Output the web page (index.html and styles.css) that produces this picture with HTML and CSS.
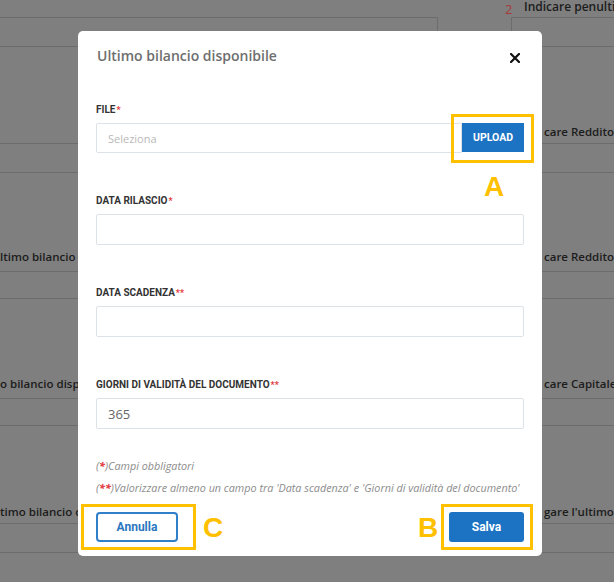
FILE: index.html
```html
<!DOCTYPE html>
<html lang="it">
<head>
<meta charset="utf-8">
<title>Ultimo bilancio disponibile</title>
<link rel="stylesheet" href="styles.css">
</head>
<body>
<div class="page">
  <div class="bg-top"><span class="bg-num">2</span><span class="bg-txt">Indicare penultim</span></div>
  <div class="bg-boxes"><div class="bg-box bg-box-l"></div><div class="bg-box bg-box-r"></div></div>
  <div class="bg-row r1"><span class="bg-left"></span><span class="bg-right">care Reddito</span></div>
  <div class="bg-sub s1"></div>
  <div class="bg-row r2"><span class="bg-left">ltimo bilancio d</span><span class="bg-right">care Reddito</span></div>
  <div class="bg-sub s2"></div>
  <div class="bg-row r3"><span class="bg-left">o bilancio dispo</span><span class="bg-right">care Capitale</span></div>
  <div class="bg-sub s3"></div>
  <div class="bg-row r4"><span class="bg-left">timo bilancio d</span><span class="bg-right">gare l'ultimo</span></div>
  <div class="bg-sub s4"></div>
</div>

<div class="modal">
  <div class="modal-header">
    <div class="title">Ultimo bilancio disponibile</div>
    <svg class="close" width="10" height="10" viewBox="0 0 10 10"><path d="M1 1L9 9M9 1L1 9" stroke="#111" stroke-width="2.2" stroke-linecap="square"/></svg>
  </div>
  <div class="form">
    <div class="field">
      <div class="label">FILE<span class="req">*</span></div>
      <div class="input-group">
        <div class="input placeholder">Seleziona</div>
        <div class="btn-upload">UPLOAD</div>
      </div>
    </div>
    <div class="field">
      <div class="label">DATA RILASCIO<span class="req">*</span></div>
      <div class="input"></div>
    </div>
    <div class="field">
      <div class="label">DATA SCADENZA<span class="req">**</span></div>
      <div class="input"></div>
    </div>
    <div class="field">
      <div class="label">GIORNI DI VALIDITÀ DEL DOCUMENTO<span class="req">**</span></div>
      <div class="input value">365</div>
    </div>
  </div>
  <div class="notes">
    <p>(<span class="req">*</span>)Campi obbligatori</p>
    <p>(<span class="req">**</span>)Valorizzare almeno un campo tra 'Data scadenza' e 'Giorni di validità del documento'</p>
  </div>
  <div class="actions">
    <div class="btn-cancel">Annulla</div>
    <div class="btn-save">Salva</div>
  </div>
</div>

<div class="anno-box anno-a"></div>
<div class="anno-box anno-b"></div>
<div class="anno-box anno-c"></div>
<div class="anno-letter letter-a">A</div>
<div class="anno-letter letter-b">B</div>
<div class="anno-letter letter-c">C</div>
</body>
</html>
```

FILE: styles.css
```css
html, body {
  margin: 0;
  padding: 0;
}
body {
  width: 614px;
  height: 582px;
  overflow: hidden;
  background: #7f7f7f;
  position: relative;
  font-family: "Open Sans", "Noto Sans", sans-serif;
}
.page {
  width: 614px;
  white-space: nowrap;
  color: #1c1c1c;
}
.bg-top {
  height: 17px;
  display: flex;
  align-items: flex-start;
  padding-left: 505px;
  box-sizing: border-box;
  font-size: 12px;
  font-weight: 600;
  line-height: 13px;
  overflow: hidden;
}
.bg-num {
  display: inline-block;
  color: #a83a3a;
  font-weight: 400;
  font-size: 13px;
  margin-top: 3px;
  width: 19px;
  flex: none;
}
.bg-txt {
  margin-top: 0;
}
.bg-boxes {
  height: 30px;
  display: flex;
  justify-content: space-between;
}
.bg-box {
  height: 30px;
  box-sizing: border-box;
  border-top: 1px solid #6c6c6c;
  border-bottom: 1px solid #6c6c6c;
}
.bg-box-l {
  width: 438px;
  border-right: 1px solid #6c6c6c;
}
.bg-box-r {
  width: 103px;
  border-left: 1px solid #6c6c6c;
}
.bg-row {
  display: grid;
  grid-template-columns: 78px 466px 70px;
  align-items: end;
  box-sizing: border-box;
  border-bottom: 1px solid #6c6c6c;
  padding-bottom: 4px;
  font-size: 11.5px;
  font-weight: 600;
  line-height: 16px;
  overflow: hidden;
}
.bg-left {
  grid-column: 1;
  overflow: hidden;
}
.bg-right {
  grid-column: 3;
  overflow: hidden;
}
.bg-sub {
  box-sizing: border-box;
  border-bottom: 1px solid #6c6c6c;
}
.r1 { height: 97px; }
.s1 { height: 29px; }
.r2 { height: 99px; }
.s2 { height: 27px; }
.r3 { height: 100px; }
.s3 { height: 27px; }
.r4 { height: 98px; }
.s4 { height: 29px; }
.r1, .r4 { padding-bottom: 3px; }
.r2, .r3 { padding-bottom: 6px; }

.modal {
  position: absolute;
  left: 78px;
  top: 31px;
  width: 464px;
  height: 525px;
  background: #fff;
  border-radius: 5px;
  padding: 15px 18px 12px;
  box-sizing: border-box;
  display: flex;
  flex-direction: column;
}
.modal-header {
  height: 20px;
  display: flex;
  justify-content: space-between;
  align-items: center;
}
.title {
  font-family: "Open Sans", sans-serif;
  font-weight: 600;
  font-size: 14px;
  line-height: 20px;
  color: #6e6e6e;
  padding-left: 1px;
}
.close {
  margin-right: 4px;
  margin-top: 4px;
}
.form {
  margin-top: 38px;
  display: flex;
  flex-direction: column;
  gap: 42px;
}
.label {
  font-family: Roboto, "Liberation Sans", sans-serif;
  font-weight: 700;
  font-size: 10px;
  line-height: 12px;
  color: #333;
  height: 12px;
}
.req {
  color: #e2383a;
  font-weight: 700;
}
.label .req {
  font-size: 9px;
  margin-left: 1px;
}
.input {
  margin-top: 7px;
  height: 31px;
  box-sizing: border-box;
  border: 1px solid #dde2e7;
  border-radius: 2px;
  padding-left: 11px;
  display: flex;
  align-items: center;
  font-family: "Open Sans", sans-serif;
}
.input-group {
  margin-top: 7px;
  height: 30px;
  display: flex;
}
.input-group .input {
  margin-top: 0;
  height: 30px;
  flex: 1;
  border-radius: 2px 0 0 2px;
}
.placeholder {
  font-size: 11px;
  color: #b9b9b9;
}
.value {
  font-size: 13px;
  color: #666;
}
.btn-upload {
  width: 62px;
  height: 29px;
  background: #1c73c3;
  color: #fff;
  font-family: Roboto, "Liberation Sans", sans-serif;
  font-weight: 700;
  font-size: 10.5px;
  display: flex;
  align-items: center;
  justify-content: center;
}
.notes {
  margin-top: 29px;
  font-family: "Open Sans", sans-serif;
  font-style: italic;
  font-size: 10.8px;
  line-height: 15px;
  color: #8c8c8c;
  white-space: nowrap;
}
.notes p {
  margin: 0 0 7px;
}
.notes p:last-child {
  margin-bottom: 0;
}
.notes .req {
  font-weight: 700;
}
.actions {
  margin-top: 17px;
  display: flex;
  justify-content: space-between;
}
.btn-cancel, .btn-save {
  height: 30px;
  box-sizing: border-box;
  display: flex;
  align-items: center;
  justify-content: center;
  font-family: Roboto, "Liberation Sans", sans-serif;
  font-weight: 700;
  font-size: 12px;
}
.btn-cancel {
  width: 82px;
  border: 2px solid #2f7fcb;
  border-radius: 4px;
  color: #2a76c0;
  background: #fff;
}
.btn-save {
  width: 75px;
  border-radius: 3px;
  background: #1c73c3;
  color: #fff;
}

.anno-box {
  position: absolute;
  border: 3px solid #ffc000;
  box-sizing: border-box;
}
.anno-a { left: 451px; top: 114px; width: 83px; height: 49px; }
.anno-b { left: 441px; top: 504px; width: 92px; height: 46px; }
.anno-c { left: 81px; top: 504px; width: 115px; height: 46px; }
.anno-letter {
  position: absolute;
  font-family: "Liberation Sans", Arial, sans-serif;
  font-weight: 700;
  font-size: 28px;
  line-height: 28px;
  color: #ffc000;
}
.letter-a { left: 484px; top: 173px; }
.letter-b { left: 418px; top: 514px; }
.letter-c { left: 203px; top: 514px; }
```
